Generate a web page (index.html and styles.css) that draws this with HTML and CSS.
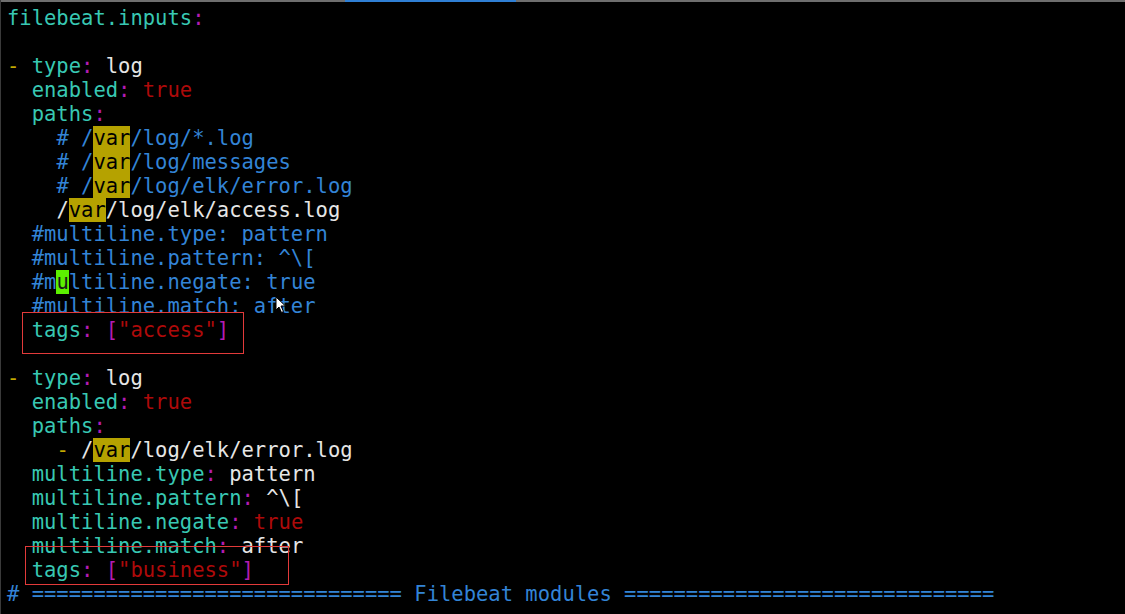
FILE: index.html
```html
<!DOCTYPE html>
<html>
<head>
<meta charset="utf-8">
<link rel="stylesheet" href="styles.css">
</head>
<body>
<div class="screen">
  <div class="topbar"><div class="seg-gray seg-left"></div><div class="seg-blue"></div><div class="seg-gray seg-fill"></div></div>
  <pre class="term"><span class="k">filebeat.inputs</span><span class="c">:</span>

<span class="y">-</span> <span class="k">type</span><span class="c">:</span> <span class="w">log</span>
  <span class="k">enabled</span><span class="c">:</span> <span class="r">true</span>
  <span class="k">paths</span><span class="c">:</span>
    <span class="b"># /</span><span class="hl">var</span><span class="b">/log/*.log</span>
    <span class="b"># /</span><span class="hl">var</span><span class="b">/log/messages</span>
    <span class="b"># /</span><span class="hl">var</span><span class="b">/log/elk/error.log</span>
    <span class="w">/</span><span class="hl">var</span><span class="w">/log/elk/access.log</span>
  <span class="b">#multiline.type: pattern</span>
  <span class="b">#multiline.pattern: ^\[</span>
  <span class="b">#m</span><span class="cur">u</span><span class="b">ltiline.negate: true</span>
  <span class="b">#multiline.match: after</span>
  <span class="k">tags</span><span class="c">:</span> <span class="c">[</span><span class="r">"access"</span><span class="c">]</span>

<span class="y">-</span> <span class="k">type</span><span class="c">:</span> <span class="w">log</span>
  <span class="k">enabled</span><span class="c">:</span> <span class="r">true</span>
  <span class="k">paths</span><span class="c">:</span>
    <span class="y">-</span> <span class="w">/</span><span class="hl">var</span><span class="w">/log/elk/error.log</span>
  <span class="k">multiline.type</span><span class="c">:</span> <span class="w">pattern</span>
  <span class="k">multiline.pattern</span><span class="c">:</span> <span class="w">^\[</span>
  <span class="k">multiline.negate</span><span class="c">:</span> <span class="r">true</span>
  <span class="k">multiline.match</span><span class="c">:</span> <span class="w">after</span>
  <span class="k">tags</span><span class="c">:</span> <span class="c">[</span><span class="r">"business"</span><span class="c">]</span>
<span class="b"># ============================== Filebeat modules ==============================</span></pre>
  <div class="box box1"></div>
  <div class="box box2"></div>
  <svg class="pointer" width="12" height="18" viewBox="0 0 12 18"><path d="M1 1 L1 14 L4 11 L6.5 16.5 L8.5 15.5 L6 10 L10.5 10 Z" fill="#ffffff" stroke="#000000" stroke-width="1"/></svg>
</div>
</body>
</html>
```
FILE: styles.css
```css
html, body {
  margin: 0;
  padding: 0;
  background: #000;
}
.screen {
  position: relative;
  width: 1125px;
  height: 614px;
  background: #000;
  overflow: hidden;
  border-left: 1px solid #3a3a3a;
  box-sizing: border-box;
}
.topbar {
  display: flex;
  height: 2px;
}
.seg-gray { background: #6e6e6e; }
.seg-left { width: 344px; }
.seg-blue { width: 171px; background: #2f7fd4; }
.seg-fill { flex: 1; }
.term {
  margin: 0;
  padding: 4px 0 0 6px;
  font-family: "DejaVu Sans Mono", monospace;
  font-size: 20.5px;
  line-height: 24px;
  color: #e6e6e6;
  white-space: pre;
}
.k { color: #38c8b3; }
.c { color: #b31cb3; }
.r { color: #ae0a0a; }
.w { color: #e6e6e6; }
.b { color: #3384d6; }
.y { color: #c4aa00; }
.hl {
  background: #b5a200;
  color: #000;
  display: inline-block;
  height: 24px;
  vertical-align: top;
}
.cur {
  background: #5cf000;
  color: #1a1a1a;
}
.box {
  position: absolute;
  border: 1px solid #e23a3a;
}
.box1 {
  left: 21px;
  top: 312px;
  width: 220px;
  height: 40px;
}
.box2 {
  left: 24px;
  top: 546px;
  width: 262px;
  height: 37px;
}
.pointer {
  position: absolute;
  left: 274px;
  top: 296px;
}
```
